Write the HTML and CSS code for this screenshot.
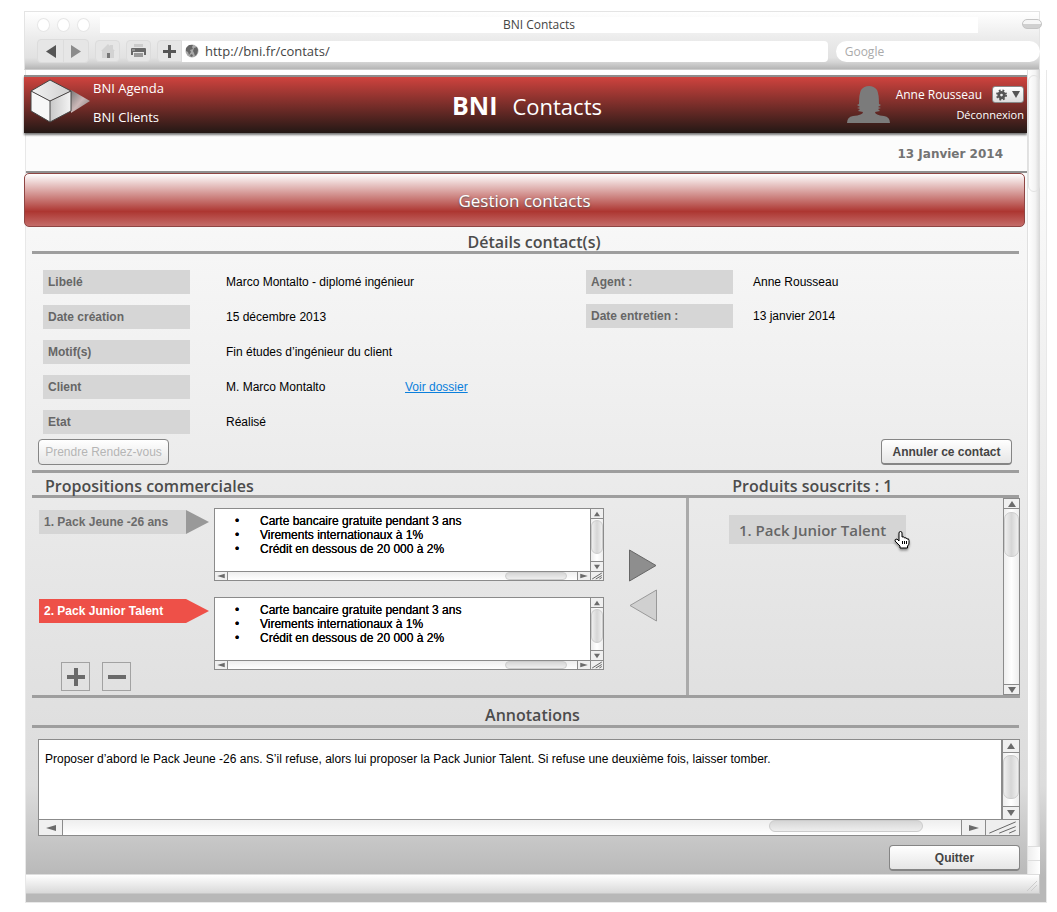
FILE: index.html
```html
<!DOCTYPE html>
<html lang="fr">
<head>
<meta charset="utf-8">
<title>BNI Contacts</title>
<link rel="stylesheet" href="styles.css">
</head>
<body>
<svg class="sprites" aria-hidden="true">
  <symbol id="up" viewBox="0 0 10 8"><path d="M5 1 9 7H1Z" fill="#6b6b6b"/></symbol>
  <symbol id="down" viewBox="0 0 10 8"><path d="M1 1H9L5 7Z" fill="#6b6b6b"/></symbol>
  <symbol id="left" viewBox="0 0 10 8"><path d="M0 4 10 1V7Z" fill="#6b6b6b"/></symbol>
  <symbol id="right" viewBox="0 0 10 8"><path d="M0 1 10 4 0 7Z" fill="#6b6b6b"/></symbol>
  <symbol id="grip" viewBox="0 0 30 16" preserveAspectRatio="none"><path d="M3 14 27 2M12 14 27 7M21 14 27 11" stroke="#666" fill="none" vector-effect="non-scaling-stroke"/></symbol>
</svg>
<div class="window">
  <header class="chrome">
    <div class="titlebar">
      <div class="lights"><i></i><i></i><i></i></div>
      <div class="window-title">BNI Contacts</div>
      <button class="pill" aria-label="Barre d'outils"></button>
    </div>
    <div class="toolbar">
      <div class="nav-pair">
        <button aria-label="Précédent"><svg width="10" height="13" viewBox="0 0 10 13"><path d="M10 0V13L0 6.500Z" fill="#555"/></svg></button>
        <button aria-label="Suivant"><svg width="10" height="13" viewBox="0 0 10 13"><path d="M0 0V13L10 6.500Z" fill="#8b8b8b"/></svg></button>
      </div>
      <button class="tool" aria-label="Accueil"><svg width="14" height="14" viewBox="0 0 14 14"><path d="M0 7 7 0 9 2V1H12V5L14 7H13V14H1V7Z" fill="#d3d3d3"/><path d="M6 9H9V14H6Z" fill="#777"/></svg></button>
      <button class="tool" aria-label="Imprimer"><svg width="15" height="14" viewBox="0 0 15 14"><path d="M3 0H12V3H3Z" fill="#ccc"/><path d="M1 4H14Q15 4 15 5V11H13V8H2V11H0V5Q0 4 1 4Z" fill="#686868"/><path d="M3 9H12V13H3Z" fill="#bbb"/><path d="M3 10H12M3 12H12" stroke="#777"/><path d="M1 6H4" stroke="#bbb"/></svg></button>
      <button class="tool add" aria-label="Ajouter"><svg width="13" height="13" viewBox="0 0 13 13"><path d="M5 0H8V5H13V8H8V13H5V8H0V5H5Z" fill="#555"/></svg></button>
      <label class="address">
        <svg width="14" height="14" viewBox="0 0 14 14"><circle cx="7" cy="7" r="6.500" fill="#aaa"/><path d="M1 4 4 1 8 1 7 3 8 5 5 6 6 8 4 11 3 8 1 7ZM9 4 12 3 13 6 12 10 10 12 9 9 8 7ZM6 10 8 11 7 13 5 12Z" fill="#666"/></svg>
        <input type="text" value="http://bni.fr/contats/" aria-label="Adresse">
      </label>
      <input class="search" type="text" placeholder="Google" aria-label="Recherche">
    </div>
  </header>

  <div class="shell">
    <div class="viewport">
      <main class="content">
        <header class="app-header">
          <div class="app-left">
            <svg class="cube" width="60" height="46" viewBox="0 0 60 46">
              <defs>
                <linearGradient id="ct" x1="0" x2="1"><stop stop-color="#f2f2f2"/><stop offset="1" stop-color="#cfcfcf"/></linearGradient>
                <linearGradient id="cr" x1="0" x2="1"><stop stop-color="#c8c8c8"/><stop offset="1" stop-color="#f4f4f4"/></linearGradient>
                <linearGradient id="ca" x1="0" x2="1" y1="0" y2="1"><stop stop-color="#777"/><stop offset=".500" stop-color="#ccb8b8"/><stop offset="1" stop-color="#777"/></linearGradient>
              </defs>
              <path d="M41 11 60 22 41 34Z" fill="url(#ca)"/>
              <path d="M1 12 20 1 41 12 20 22Z" fill="url(#ct)"/>
              <path d="M1 12 20 22V43L1 32Z" fill="#f7f7f7"/>
              <path d="M41 12 20 22V43L41 32Z" fill="url(#cr)"/>
              <path d="M1 12 20 1 41 12V32L20 43 1 32ZL20 22 41 12M20 22V43" fill="none" stroke="#444"/>
            </svg>
            <nav class="app-nav"><a href="#agenda">BNI Agenda</a><a href="#clients">BNI Clients</a></nav>
          </div>
          <h1 class="brand"><strong>BNI</strong><span>Contacts</span></h1>
          <div class="account">
            <svg width="43" height="38" viewBox="0 0 43 38"><path d="M0 37Q0 31 6 30Q16 29 16 26L11 25 13 23 10 22 13 21 10 19 12 18Q12 8 14 4Q17 0 22 0Q27 0 30 4Q32 8 32 18L34 19 31 21 34 22 31 23 33 25 28 26Q28 29 37 30Q43 31 43 37Z" fill="#7b7b7b"/></svg>
            <div class="account-text">
              <div class="account-row"><span>Anne Rousseau</span>
                <button class="gear" aria-label="Paramètres"><svg width="11" height="12" viewBox="0 0 12 12"><circle cx="6" cy="6" r="5" fill="none" stroke="#555" stroke-width="2" stroke-dasharray="2 2"/><circle cx="6" cy="6" r="3" fill="none" stroke="#555" stroke-width="3"/></svg><svg width="8" height="7" viewBox="0 0 8 7"><path d="M0 0H8L4 7Z" fill="#555"/></svg></button>
              </div>
              <a class="logout" href="#logout">Déconnexion</a>
            </div>
          </div>
        </header>
        <div class="date">13 Janvier 2014</div>
        <div class="banner">Gestion contacts</div>

        <h2 class="section-title">Détails contact(s)</h2>
        <section class="details">
          <dl class="fields">
            <dt>Libelé</dt><dd>Marco Montalto - diplomé ingénieur</dd>
            <dt>Date création</dt><dd>15 décembre 2013</dd>
            <dt>Motif(s)</dt><dd>Fin études d’ingénieur du client</dd>
            <dt>Client</dt><dd><span class="client-name">M. Marco Montalto</span><a href="#dossier">Voir dossier</a></dd>
            <dt>Etat</dt><dd>Réalisé</dd>
          </dl>
          <dl class="fields side">
            <dt>Agent :</dt><dd>Anne Rousseau</dd>
            <dt>Date entretien :</dt><dd>13 janvier 2014</dd>
          </dl>
        </section>
        <div class="detail-actions">
          <button class="btn" disabled>Prendre Rendez-vous</button>
          <button class="btn">Annuler ce contact</button>
        </div>

        <div class="split-title">
          <h2>Propositions commerciales</h2>
          <h2>Produits souscrits : 1</h2>
        </div>
        <section class="split">
          <div class="offers">
            <div class="offer-list">
              <div class="offer">
                <button class="tag">1. Pack Jeune -26 ans</button>
                <div class="box">
                  <ul><li>Carte bancaire gratuite pendant 3 ans</li><li>Virements internationaux à 1%</li><li>Crédit en dessous de 20 000 à 2%</li></ul>
                  <div class="vbar"><b><svg><use href="#up"/></svg></b><span><i></i></span><b><svg><use href="#down"/></svg></b></div>
                  <div class="hbar"><b><svg><use href="#left"/></svg></b><span><i></i></span><b><svg><use href="#right"/></svg></b></div>
                  <div class="corner"><svg><use href="#grip"/></svg></div>
                </div>
              </div>
              <div class="offer">
                <button class="tag active">2. Pack Junior Talent</button>
                <div class="box">
                  <ul><li>Carte bancaire gratuite pendant 3 ans</li><li>Virements internationaux à 1%</li><li>Crédit en dessous de 20 000 à 2%</li></ul>
                  <div class="vbar"><b><svg><use href="#up"/></svg></b><span><i></i></span><b><svg><use href="#down"/></svg></b></div>
                  <div class="hbar"><b><svg><use href="#left"/></svg></b><span><i></i></span><b><svg><use href="#right"/></svg></b></div>
                  <div class="corner"><svg><use href="#grip"/></svg></div>
                </div>
              </div>
              <div class="edit-buttons">
                <button aria-label="Ajouter une proposition"><svg width="18" height="18" viewBox="0 0 18 18"><path d="M7 0H11V7H18V11H11V18H7V11H0V7H7Z" fill="#6a6a6a"/></svg></button>
                <button aria-label="Retirer une proposition"><svg width="18" height="18" viewBox="0 0 18 18"><path d="M0 7H18V11H0Z" fill="#6a6a6a"/></svg></button>
              </div>
            </div>
            <div class="transfer">
              <button aria-label="Souscrire"><svg width="28" height="33" viewBox="0 0 28 33"><path d="M.500 1V32L27 16.500Z" fill="#8e8e8e" stroke="#666"/></svg></button>
              <button aria-label="Retirer"><svg width="28" height="33" viewBox="0 0 28 33"><path d="M27.500 1V32L1 16.500Z" fill="#d0d0d0" stroke="#999"/></svg></button>
            </div>
          </div>
          <div class="products">
            <div class="product">1. Pack Junior Talent
              <svg class="hand" width="17" height="19" viewBox="0 0 17 19"><path d="M5 10V2Q5 .500 6.500 .500Q8 .500 8 2V6Q10 5 10.500 7Q12.500 6 13 8Q15 7 15 9.500V12Q15 14 13.500 15V17H6V15L1 10Q.500 8 3 8Z" fill="#fff" stroke="#000"/><path d="M8.500 10V13M10.500 10V13M12.500 10V13" stroke="#000"/></svg>
            </div>
            <div class="vbar products-bar"><b><svg><use href="#up"/></svg></b><span><i></i></span><b><svg><use href="#down"/></svg></b></div>
          </div>
        </section>

        <h2 class="section-title notes-title"><label for="notes">Annotations</label></h2>
        <section class="notes">
          <div class="box notes-box">
            <textarea id="notes">Proposer d’abord le Pack Jeune -26 ans. S’il refuse, alors lui proposer la Pack Junior Talent. Si refuse une deuxième fois, laisser tomber.</textarea>
            <div class="vbar"><b><svg><use href="#up"/></svg></b><span><i></i></span><b><svg><use href="#down"/></svg></b></div>
            <div class="hbar"><b><svg><use href="#left"/></svg></b><span><i></i></span><b><svg><use href="#right"/></svg></b></div>
            <div class="corner"><svg><use href="#grip"/></svg></div>
          </div>
          <button class="btn quit">Quitter</button>
        </section>
      </main>
      <div class="page-bar"><i></i><div><b></b><b></b></div></div>
    </div>
    <footer class="status"><svg width="10" height="10" viewBox="0 0 10 10"><path d="M0 10 10 0M4 10 10 4" stroke="#ccc"/></svg></footer>
  </div>
</div>
</body>
</html>
```
FILE: styles.css
```css
* { box-sizing: border-box; }
body { margin: 0; background: #fff; color: #000; font: 12px/14px "Liberation Sans", Arial, sans-serif; }
button, input, textarea { font: inherit; color: inherit; margin: 0; padding: 0; border: 0; background: none; outline: 0; }
h1, h2, dl, dd, ul { margin: 0; padding: 0; }
svg { display: block; flex: none; }
.sprites { position: absolute; width: 0; height: 0; }
.window { padding: 11px 10px 10px 24px; }

/* Browser chrome */
.chrome {
  margin-right: 7px; height: 59px; border: 1px solid #e4e4e4; border-bottom-color: #ccc;
  background: linear-gradient(#fff, #ececec 45%, #e2e2e2 80%, #d4d4d4 88%, #b5b5b5);
  font-family: "Open Sans", sans-serif; color: #444;
}
.titlebar { display: flex; align-items: center; height: 22px; margin-top: 2px; padding-left: 12px; }
.lights { display: flex; gap: 7px; width: 63px; }
.lights i { width: 13px; height: 14px; border: 1px solid #e6e6e6; border-radius: 50%; background: #fff; }
.window-title { flex: 1; height: 16px; line-height: 16px; background: #fff; text-align: center; }
.pill { width: 20px; height: 10px; margin: 0 -3px 2px 44px; border: 1px solid #c4c4c4; border-radius: 5px; background: linear-gradient(#f6f6f6 50%, #d0d0d0 50%); }
.toolbar { display: flex; align-items: center; height: 24px; margin-top: 3px; padding-left: 12px; }
.toolbar button { display: flex; align-items: center; justify-content: center; height: 22px; width: 25px; }
.nav-pair { display: flex; border: 1px solid #dcdcdc; border-radius: 4px; margin-right: 6px; background: #e6e6e6; }
.nav-pair button + button { border-left: 1px solid #dcdcdc; }
.toolbar .tool { border: 1px solid #dcdcdc; border-radius: 4px; background: #e6e6e6; margin-right: 6px; }
.toolbar .add { margin-right: 0; width: 25px; border-radius: 4px 0 0 4px; }
.address { display: flex; align-items: center; gap: 6px; flex: 645; height: 21px; padding-left: 3px; background: #fff; border-radius: 0 4px 4px 0; }
.address input { flex: 1; min-width: 0; font-size: 13px; line-height: 18px; }
.search { flex: 196; min-width: 0; height: 21px; margin: 0 -1px 0 8px; padding-left: 9px; border-radius: 11px; background: #fff; }
.search::placeholder { color: #aaa; opacity: 1; }

/* Page shell */
.shell {
  margin-left: 1px; border: 1px solid #e8e8e8; border-top: 0; padding-bottom: 8px;
  background: linear-gradient(#fff, #fbfbfb 10%, #eaeaea 52%, #dcdcdc 86%, #b8b8b8 97%);
}
.viewport { display: flex; padding-right: 6px; }
.content { flex: 1; min-width: 0; padding: 5px 0 3px; }
.page-bar { display: flex; flex-direction: column; justify-content: space-between; width: 13px; border-left: 1px solid #e0e0e0; background: linear-gradient(90deg, #fff, #f3f3f3 60%, #d6d6d6); }
.page-bar i { height: 117px; margin-top: 5px; border: 1px solid #e2e2e2; border-radius: 7px; }
.page-bar b { display: block; height: 14px; background: linear-gradient(90deg, #eee, #fff); border-top: 1px solid #ddd; }
.status { display: flex; align-items: flex-end; justify-content: flex-end; height: 20px; margin-right: 6px; padding: 2px; border: 1px solid #c8c8c8; border-top-color: #ddd; border-left: 0; background: linear-gradient(#fff, #d9d9d9); }

/* Application header */
.app-header {
  display: grid; grid-template-columns: 1fr auto 1fr; height: 58px; margin: 0 0 4px -2px; padding: 2px 3px 0 6px;
  border-top: 2px solid #8d8d8d; box-shadow: 0 2px 2px #777;
  background: linear-gradient(#cf433e, #231815);
  font-family: "Open Sans", sans-serif; color: #fff;
}
.app-header a { color: inherit; text-decoration: none; }
.app-left { display: flex; gap: 3px; font-size: 13px; line-height: 18px; }
.app-nav { display: flex; flex-direction: column; gap: 11px; }
.brand { display: flex; align-items: baseline; gap: 15px; padding-top: 6px; font-size: 22px; line-height: 40px; font-weight: 400; }
.brand strong { font-size: 25px; }
.account { display: flex; justify-content: flex-end; gap: 6px; padding-top: 7px; }
.account-text { display: flex; flex-direction: column; align-items: flex-end; gap: 4px; }
.account-row { display: flex; align-items: center; gap: 10px; }
.gear { display: flex; align-items: center; justify-content: center; gap: 5px; width: 32px; height: 17px; border: 1px solid #888; border-radius: 3px; background: linear-gradient(#fff, #ddd); }
.logout { font-size: 11px; line-height: 16px; }
.date { height: 36px; border-bottom: 2px solid #8f8f8f; background: #fcfcfc; padding-right: 24px; text-align: right; font: 700 12px/34px "DejaVu Sans", sans-serif; color: #737373; }
.banner {
  height: 54px; margin: 0 2px 0 -2px; border: 1px solid #8f4543; border-radius: 5px;
  background: linear-gradient(#fff, #ad3631 72%, #c46c69);
  text-align: center; font: 17px/54px "Open Sans", sans-serif; color: #fff; text-shadow: 0 1px 2px #555;
}

/* Sections */
.section-title { height: 27px; margin: 0 8px 0 6px; padding-left: 17px; border-bottom: 3px solid #9e9e9e; text-align: center; }
.section-title, .split-title h2, .product { font: 600 16px/30px "Open Sans", sans-serif; color: #4c4c4c; }
.details { display: grid; grid-template-columns: 543fr 434fr; padding: 16px 7px 0 17px; }
.fields { display: grid; grid-template-columns: 147px 1fr; column-gap: 36px; row-gap: 11px; align-content: start; line-height: 24px; }
.fields.side { column-gap: 20px; row-gap: 10px; }
.fields dt { height: 24px; padding-left: 5px; background: #d6d6d6; color: #666; font-weight: 700; }
.fields dd { display: flex; }
.client-name { width: 179px; }
.fields a { color: #0a7fdc; }
.detail-actions { display: flex; justify-content: space-between; margin: 0 8px 0 6px; padding: 5px 7px 5px 6px; border-bottom: 3px solid #9e9e9e; }
.btn { width: 131px; height: 26px; border: 1px solid #858585; border-bottom-width: 2px; border-radius: 4px; background: linear-gradient(#fff, #e6e6e6); color: #444; font-weight: 700; }
.btn:disabled { border-bottom-width: 1px; font-weight: 400; color: #b5b5b5; }
.split-title { display: grid; grid-template-columns: 688fr 287fr; height: 25px; margin: 0 8px 0 6px; padding-left: 13px; border-bottom: 3px solid #9e9e9e; }
.split-title h2 { line-height: 26px; }
.split { display: grid; grid-template-columns: 657fr 331fr; height: 200px; margin: 0 7px 0 6px; border-bottom: 3px solid #9e9e9e; }

/* Offers */
.offers { display: flex; gap: 25px; border-right: 3px solid #aaa; padding: 10px 29px 0 7px; }
.offer-list { flex: 1; min-width: 0; }
.offer { display: flex; gap: 5px; margin-bottom: 16px; }
.offer .box { flex: 1; }
.tag { position: relative; width: 147px; height: 24px; margin: 2px 23px 0 0; padding-left: 5px; background: #d5d5d5; color: #6b6b6b; font-weight: 700; text-align: left; }
.tag::after { content: ""; position: absolute; left: 100%; top: 0; border: 12px solid transparent; border-left: 23px solid #999; border-right: 0; }
.tag.active { background: #ee5048; color: #fff; }
.tag.active::after { border-left-color: #ee5048; }
.edit-buttons { display: flex; gap: 12px; padding: 0 0 0 22px; margin-top: -24px; }
.edit-buttons button { display: flex; align-items: center; justify-content: center; width: 29px; height: 29px; border: 1px solid #a2a2a2; }
.transfer { display: flex; flex-direction: column; gap: 7px; padding-top: 41px; }
.products { display: flex; justify-content: space-between; align-items: flex-start; }
.product { position: relative; height: 29px; width: 177px; margin: 17px 0 0 40px; padding-left: 10px; background: #d5d5d5; font-size: 15px; color: #666; }
.hand { position: absolute; right: -5px; top: 16px; filter: drop-shadow(0 2px 1px #888); }

/* Boxes and scroll bars */
.box { display: grid; grid-template-columns: 1fr 13px; grid-template-rows: 1fr 9px; height: 73px; border: 1px solid #8b8b8b; background: #fff; }
.box ul { padding: 5px 0 0 45px; list-style: none; text-shadow: 0 0 0 #000; }
.box li::before { content: "•"; display: inline-block; width: 25px; margin-left: -25px; }
.vbar, .hbar { display: flex; background: linear-gradient(90deg, #eee, #fff 50%, #eee); }
.vbar { flex-direction: column; border-left: 1px solid #8b8b8b; }
.hbar { background: linear-gradient(#eee, #fff); border-top: 1px solid #8b8b8b; }
.vbar b, .hbar b { display: flex; align-items: center; justify-content: center; background: #f0f0f0; }
.vbar b { height: 10px; }
.hbar b { width: 13px; }
.vbar b:first-child { border-bottom: 1px solid #8b8b8b; }
.vbar b:last-child { border-top: 1px solid #8b8b8b; }
.hbar b:first-child { border-right: 1px solid #8b8b8b; }
.hbar b:last-child { border-left: 1px solid #8b8b8b; }
.vbar svg, .hbar svg { width: 8px; height: 6px; }
.vbar span, .hbar span { display: flex; flex: 1; }
.vbar span { flex-direction: column; padding: 1px 0; }
.hbar span { justify-content: flex-end; padding-right: 10px; }
.vbar i, .hbar i { border: 1px solid #ccc; border-radius: 7px; background: linear-gradient(90deg, #eee, #d6d6d6, #eee); }
.vbar i { height: 34px; }
.hbar i { width: 62px; background: linear-gradient(#d6d6d6, #eee); }
.corner { border-left: 1px solid #8b8b8b; border-top: 1px solid #8b8b8b; background: #eee; }
.corner svg { width: 100%; height: 100%; }
.products-bar { width: 17px; height: 100%; border: 1px solid #8b8b8b; }
.products-bar i { height: 45px; margin-top: 2px; }

/* Notes */
.notes-title { height: 30px; line-height: 34px; padding-left: 14px; }
.notes { display: flex; flex-direction: column; align-items: flex-end; gap: 9px; padding: 11px 7px 0 12px; }
.notes-box { width: 100%; height: 97px; grid-template-columns: 1fr 18px; grid-template-rows: 1fr 16px; }
.notes-box textarea { resize: none; padding: 12px 6px; overflow: hidden; }
.notes-box .vbar { border-left-width: 2px; }
.notes-box .vbar b { height: 13px; }
.notes-box .vbar i { height: 44px; margin-top: 1px; }
.notes-box .hbar b { width: 24px; }
.notes-box .hbar span { padding-right: 38px; }
.notes-box .hbar i { width: 154px; height: 12px; }
.notes-box .vbar svg, .notes-box .hbar svg, .products-bar svg { width: 10px; height: 8px; }
.notes-box .corner { width: 34px; margin-left: -16px; }
.notes-box .hbar { padding-right: 16px; }
```
